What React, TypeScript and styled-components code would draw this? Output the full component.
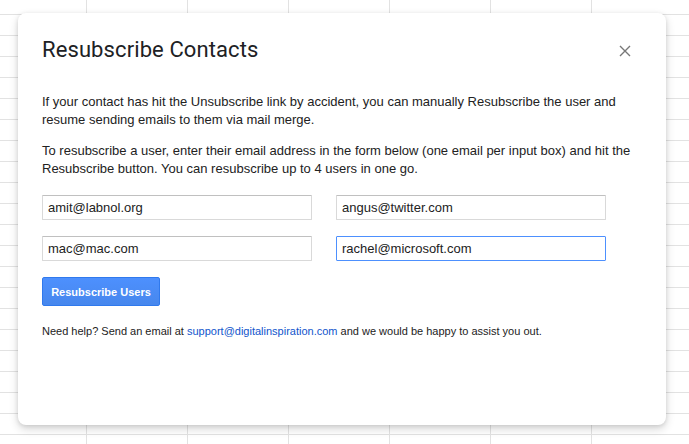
import React from "react";
import styled, { createGlobalStyle } from "styled-components";

const Global = createGlobalStyle`
  html, body { margin: 0; padding: 0; }
  body {
    width: 689px;
    height: 444px;
    overflow: hidden;
    background-color: #ffffff;
    background-image:
      linear-gradient(to right, #e2e2e2 1px, transparent 1px),
      linear-gradient(to bottom, #e2e2e2 1px, transparent 1px);
    background-size: 101px 21px;
    background-position: 86px 14px;
    font-family: "Liberation Sans", Arial, sans-serif;
  }
`;

const Page = styled.div`
  padding: 13px 23px 19px 18px;
  height: 444px;
  box-sizing: border-box;
`;

const Dialog = styled.div`
  width: 648px;
  height: 412px;
  box-sizing: border-box;
  background: #fff;
  border-radius: 8px;
  box-shadow: 0 4px 10px rgba(0, 0, 0, 0.16), 0 1px 4px rgba(0, 0, 0, 0.1);
  padding: 23px 34px 0 24px;
  display: flex;
  flex-direction: column;
`;

const Header = styled.div`
  display: flex;
  align-items: center;
  justify-content: space-between;
  height: 28px;
`;

const Title = styled.h1`
  margin: 0;
  font-family: Roboto, "Open Sans", sans-serif;
  font-size: 22px;
  font-weight: 400;
  line-height: 28px;
  color: #202124;
  letter-spacing: 0.1px;
`;

const CloseButton = styled.button`
  border: none;
  background: none;
  padding: 0;
  width: 14px;
  height: 14px;
  display: flex;
  align-items: center;
  justify-content: center;
  cursor: pointer;
  margin-top: 1px;
`;

const Para = styled.p<{ $top: number }>`
  margin: ${(p) => p.$top}px 0 0;
  font-size: 13px;
  line-height: 18px;
  color: #222;
`;

const Form = styled.div`
  margin-top: 17px;
  display: grid;
  grid-template-columns: 270px 270px;
  column-gap: 24px;
  row-gap: 16px;
`;

const Input = styled.input<{ $focused?: boolean }>`
  box-sizing: border-box;
  width: 270px;
  height: 25px;
  padding: 0 5px;
  border: 1px solid ${(p) => (p.$focused ? "#4d90fe" : "#d9d9d9")};
  border-top-color: ${(p) => (p.$focused ? "#4d90fe" : "#c0c0c0")};
  border-radius: 1px;
  font-family: "Liberation Sans", Arial, sans-serif;
  font-size: 13px;
  color: #222;
  background: #fff;
  outline: none;
`;

const Button = styled.button`
  margin-top: 16px;
  align-self: flex-start;
  height: 29px;
  width: 118px;
  padding: 0;
  border: 1px solid #3079ed;
  border-radius: 2px;
  background: linear-gradient(#4d90fe, #4787ed);
  color: #fff;
  font-family: "Liberation Sans", Arial, sans-serif;
  font-size: 11px;
  font-weight: 700;
  cursor: pointer;
`;

const Footer = styled.p`
  margin: 17px 0 0;
  font-size: 11px;
  line-height: 16px;
  color: #222;
`;

const Link = styled.a`
  color: #1155cc;
  text-decoration: none;
`;

export default function App() {
  return (
    <>
      <Global />
      <Page>
        <Dialog>
          <Header>
            <Title>Resubscribe Contacts</Title>
            <CloseButton aria-label="Close">
              <svg width="12" height="12" viewBox="0 0 12 12">
                <path d="M1 1L11 11M11 1L1 11" stroke="#777" strokeWidth="1.4" fill="none" />
              </svg>
            </CloseButton>
          </Header>
          <Para $top={29}>
            If your contact has hit the Unsubscribe link by accident, you can manually Resubscribe the user and
            resume sending emails to them via mail merge.
          </Para>
          <Para $top={13}>
            To resubscribe a user, enter their email address in the form below (one email per input box) and hit the
            Resubscribe button. You can resubscribe up to 4 users in one go.
          </Para>
          <Form>
            <Input defaultValue="amit@labnol.org" />
            <Input defaultValue="angus@twitter.com" />
            <Input defaultValue="mac@mac.com" />
            <Input defaultValue="rachel@microsoft.com" $focused />
          </Form>
          <Button>Resubscribe Users</Button>
          <Footer>
            Need help? Send an email at <Link href="#">support@digitalinspiration.com</Link> and we would be happy
            to assist you out.
          </Footer>
        </Dialog>
      </Page>
    </>
  );
}
